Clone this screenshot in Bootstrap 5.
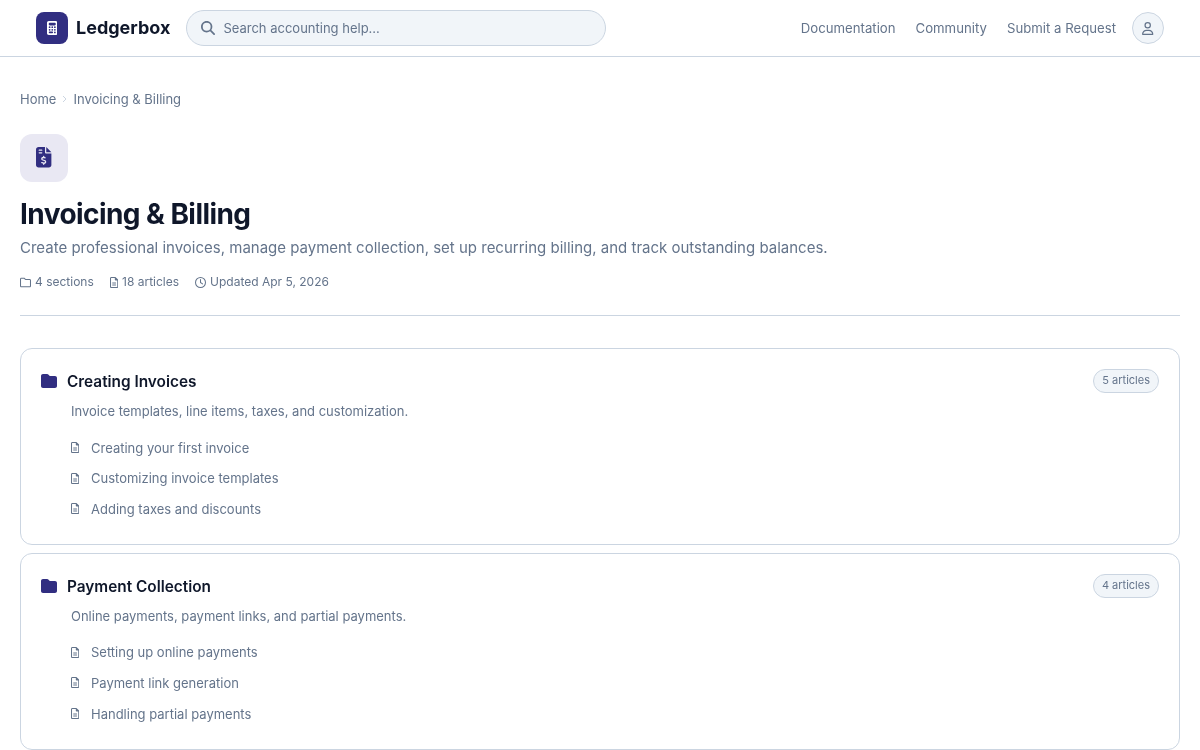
<!DOCTYPE html>
<html lang="en">
<head>
<meta charset="utf-8">
<title>Invoicing &amp; Billing</title>
<link href="https://cdn.jsdelivr.net/npm/bootstrap@5.3.0/dist/css/bootstrap.min.css" rel="stylesheet">
<style>
html,body{height:750px;overflow:hidden}
body{font-family:Inter,"Liberation Sans",sans-serif;color:#0f172a;background:#fff}
svg{fill:currentColor;flex:none}
.page-shell{will-change:transform}
.topbar{height:57px;padding:0 36px;border-bottom:1px solid #cbd5e1}
.logo-box{width:32px;height:32px;border-radius:8px;background:#312e81;color:#fff}
.brand-name{font-size:18px;font-weight:700;color:#0f172a;margin-left:8px;padding-bottom:2px}
.search-pill{width:420px;height:36px;margin-left:16px;padding:0 14px;gap:8px;background:#f1f5f9;border:1px solid #cbd5e1;border-radius:18px;color:#64748b;font-size:13px}
.search-text{padding-top:2px}
.top-link{font-size:13.2px;color:#64748b;text-decoration:none;padding-top:2px}
.avatar{width:32px;height:32px;border-radius:50%;background:#f1f5f9;border:1px solid #cbd5e1;color:#64748b}
.page-main{padding:32px 20px 0}
.crumbs{font-size:13px;line-height:20px;color:#64748b}
.crumbs a{color:#64748b;text-decoration:none}
.crumb-sep{margin:0 6px}
.hero-icon{width:48px;height:48px;border-radius:12px;background:#e9e8f3;color:#312e81;margin-top:25px;padding-bottom:1px}
.hero-title{font-size:28px;font-weight:700;line-height:34px;letter-spacing:-.56px;margin:15px 0 0;color:#0f172a}
.hero-sub{font-size:15px;line-height:22px;color:#64748b;margin:6px 0 0}
.hero-meta{font-size:12px;line-height:18px;color:#64748b;margin-top:14px;padding-bottom:24px;border-bottom:1px solid #cbd5e1;margin-bottom:32px}
.sec-card{height:196.8px;border:1px solid #cbd5e1;border-radius:12px;padding:20px;margin-bottom:8px}
.sec-head{height:24px}
.sec-title{font-size:15.36px;font-weight:600;line-height:24px;margin:0;padding-top:2px;color:#0f172a}
.sec-count{height:24px;padding:0 8px 2px;font-size:11px;color:#64748b;background:#f1f5f9;border:1px solid #cbd5e1;border-radius:12px}
.sec-desc{font-size:13px;line-height:20px;color:#64748b;margin:8px 0 0 30px}
.art-list{margin:12px 0 0 30px;padding:0;list-style:none}
.art-list li{height:30.7px;font-size:13px;color:#64748b}
.art-list a{color:#64748b;text-decoration:none}
.art-list svg{margin-right:11.750px;position:relative;top:-1px}
.folder-ico{margin-right:10px;color:#312e81}
</style>
</head>
<body>
<svg class="d-none">
  <symbol id="i-doc" viewBox="0 0 384 512"><path d="M64 464c-8.800 0-16-7.200-16-16V64c0-8.800 7.200-16 16-16H224v80c0 17.700 14.300 32 32 32h80V448c0 8.800-7.200 16-16 16H64zM64 0C28.700 0 0 28.700 0 64V448c0 35.300 28.700 64 64 64H320c35.300 0 64-28.700 64-64V154.500c0-17-6.700-33.300-18.700-45.300L274.700 18.700C262.700 6.700 246.500 0 229.500 0H64zm56 256c-13.300 0-24 10.700-24 24s10.700 24 24 24H264c13.300 0 24-10.700 24-24s-10.700-24-24-24H120zm0 96c-13.300 0-24 10.700-24 24s10.700 24 24 24H264c13.300 0 24-10.700 24-24s-10.700-24-24-24H120z"/></symbol>
  <symbol id="i-folder" viewBox="0 0 512 512"><path d="M64 480H448c35.300 0 64-28.700 64-64V160c0-35.300-28.700-64-64-64H288c-10.100 0-19.600-4.700-25.600-12.800L243.200 57.600C231.100 41.500 212.100 32 192 32H64C28.700 32 0 60.700 0 96V416c0 35.300 28.700 64 64 64z"/></symbol>
</svg>
<div class="page-shell">
<nav class="topbar d-flex align-items-center">
  <div class="logo-box d-flex align-items-center justify-content-center">
    <svg width="10.500" height="14" viewBox="0 0 384 512"><path d="M64 0C28.700 0 0 28.700 0 64V448c0 35.300 28.700 64 64 64H320c35.300 0 64-28.700 64-64V64c0-35.300-28.700-64-64-64H64zM96 64H288c17.700 0 32 14.300 32 32v32c0 17.700-14.300 32-32 32H96c-17.700 0-32-14.300-32-32V96c0-17.700 14.300-32 32-32zm32 160a32 32 0 1 1 -64 0 32 32 0 1 1 64 0zM96 352a32 32 0 1 1 0-64 32 32 0 1 1 0 64zM64 416c0-17.700 14.300-32 32-32h96c17.700 0 32 14.300 32 32s-14.300 32-32 32H96c-17.700 0-32-14.300-32-32zM192 256a32 32 0 1 1 0-64 32 32 0 1 1 0 64zm32 64a32 32 0 1 1 -64 0 32 32 0 1 1 64 0zm64-64a32 32 0 1 1 0-64 32 32 0 1 1 0 64zm32 64a32 32 0 1 1 -64 0 32 32 0 1 1 64 0zM288 448a32 32 0 1 1 0-64 32 32 0 1 1 0 64z"/></svg>
  </div>
  <span class="brand-name">Ledgerbox</span>
  <div class="search-pill d-flex align-items-center">
    <svg width="14" height="14" viewBox="0 0 512 512"><path d="M416 208c0 45.900-14.900 88.300-40 122.700L502.600 457.400c12.500 12.500 12.500 32.800 0 45.300s-32.800 12.500-45.300 0L330.700 376c-34.400 25.200-76.800 40-122.700 40C93.100 416 0 322.900 0 208S93.100 0 208 0S416 93.100 416 208zM208 352a144 144 0 1 0 0-288 144 144 0 1 0 0 288z"/></svg>
    <span class="search-text">Search accounting help...</span>
  </div>
  <div class="ms-auto d-flex align-items-center gap-3">
    <a class="top-link me-1" href="#">Documentation</a>
    <a class="top-link me-1" href="#">Community</a>
    <a class="top-link" href="#">Submit a Request</a>
    <div class="avatar d-flex align-items-center justify-content-center">
      <svg width="11.400" height="13" viewBox="0 0 448 512"><path d="M304 128a80 80 0 1 0 -160 0 80 80 0 1 0 160 0zM96 128a128 128 0 1 1 256 0A128 128 0 1 1 96 128zM49.300 464H398.700c-8.900-63.300-63.300-112-129-112H178.300c-65.700 0-120.100 48.700-129 112zM0 482.300C0 383.800 79.800 304 178.300 304h91.400C368.200 304 448 383.800 448 482.300c0 16.400-13.300 29.700-29.700 29.700H29.700C13.300 512 0 498.700 0 482.300z"/></svg>
    </div>
  </div>
</nav>
<main class="page-main">
  <div class="crumbs d-flex align-items-center">
    <a href="#">Home</a>
    <svg class="crumb-sep" width="5" height="8" viewBox="0 0 5 8" style="fill:none" stroke="#cbd5e1" stroke-width="1"><path d="M1 1l3 3-3 3"/></svg>
    <a href="#">Invoicing &amp; Billing</a>
  </div>
  <div class="hero-icon d-flex align-items-center justify-content-center">
    <svg width="15.400" height="20.500" viewBox="0 0 384 512"><path d="M64 0C28.700 0 0 28.700 0 64V448c0 35.300 28.700 64 64 64H320c35.300 0 64-28.700 64-64V160H256c-17.700 0-32-14.300-32-32V0H64zM256 0V128H384L256 0zM64 80c0-8.800 7.200-16 16-16h64c8.800 0 16 7.200 16 16s-7.200 16-16 16H80c-8.800 0-16-7.200-16-16zm0 64c0-8.800 7.200-16 16-16h64c8.800 0 16 7.200 16 16s-7.200 16-16 16H80c-8.800 0-16-7.200-16-16zm128 72c8.800 0 16 7.200 16 16v17.300c8.500 1.200 16.700 3.100 24.100 5.100c8.500 2.300 13.600 11 11.300 19.600s-11 13.600-19.600 11.300c-11.100-3-22-5.200-32.100-5.300c-8.400-.1-17.400 1.800-23.600 5.500c-5.700 3.400-8.100 7.300-8.100 12.800c0 3.700 1.300 6.500 7.300 10.100c6.900 4.100 16.600 7.100 29.200 10.900l.5 .1c11.300 3.400 25.300 7.600 36.300 14.600c12.100 7.600 22.400 19.700 22.700 38.200c.3 19.300-9.600 33.300-22.900 41.600c-7.700 4.800-16.400 7.600-25.100 9.100V432c0 8.800-7.200 16-16 16s-16-7.200-16-16V414.800c-11.200-2.100-21.700-5.700-30.900-8.900c-2.100-.7-4.200-1.400-6.200-2.100c-8.400-2.800-12.900-11.900-10.100-20.200s11.900-12.900 20.200-10.100c2.500 .8 4.800 1.600 7.100 2.400c13.600 4.600 24.600 8.400 36.300 8.700c9.100 .3 17.900-1.700 23.700-5.300c5.100-3.200 7.900-7.300 7.800-14c-.1-4.600-1.800-7.800-7.700-11.600c-6.800-4.300-16.500-7.400-29-11.200l-1.600-.5c-11-3.300-24.300-7.300-34.800-13.700c-12-7.300-22.600-18.900-22.700-37.300c-.1-19.400 10.800-32.800 23.800-40.500c7.500-4.400 15.800-7.200 24.100-8.700V232c0-8.800 7.200-16 16-16z"/></svg>
  </div>
  <h1 class="hero-title">Invoicing &amp; Billing</h1>
  <p class="hero-sub">Create professional invoices, manage payment collection, set up recurring billing, and track outstanding balances.</p>
  <div class="hero-meta d-flex align-items-center">
    <svg width="11" height="11" viewBox="0 0 512 512"><path d="M64 480H448c35.300 0 64-28.700 64-64V160c0-35.300-28.700-64-64-64H298.500c-17 0-33.300-6.700-45.300-18.700L226.700 50.700c-12-12-28.300-18.700-45.300-18.700H64C28.700 32 0 60.700 0 96V416c0 35.300 28.700 64 64 64zM48 96c0-8.800 7.200-16 16-16H181.500c4.200 0 8.300 1.700 11.300 4.700l26.500 26.500c21 21 49.500 32.800 79.200 32.800H448c8.800 0 16 7.200 16 16V416c0 8.800-7.200 16-16 16H64c-8.800 0-16-7.200-16-16V96z"/></svg>
    <span class="ms-1 me-3">4 sections</span>
    <svg width="8.250" height="11"><use href="#i-doc"/></svg>
    <span class="ms-1 me-3">18 articles</span>
    <svg width="11" height="11" viewBox="0 0 512 512"><path d="M464 256A208 208 0 1 1 48 256a208 208 0 1 1 416 0zM0 256a256 256 0 1 0 512 0A256 256 0 1 0 0 256zM232 120V256c0 8 4 15.500 10.700 20l96 64c11 7.400 25.900 4.400 33.300-6.700s4.400-25.900-6.700-33.300L280 243.200V120c0-13.300-10.700-24-24-24s-24 10.700-24 24z"/></svg>
    <span class="ms-1">Updated Apr 5, 2026</span>
  </div>

  <section class="sec-card">
    <div class="sec-head d-flex align-items-center">
      <svg class="folder-ico" width="16" height="16"><use href="#i-folder"/></svg>
      <h2 class="sec-title">Creating Invoices</h2>
      <span class="sec-count ms-auto d-inline-flex align-items-center">5 articles</span>
    </div>
    <p class="sec-desc">Invoice templates, line items, taxes, and customization.</p>
    <ul class="art-list">
      <li class="d-flex align-items-center"><svg width="8.250" height="11"><use href="#i-doc"/></svg><a href="#">Creating your first invoice</a></li>
      <li class="d-flex align-items-center"><svg width="8.250" height="11"><use href="#i-doc"/></svg><a href="#">Customizing invoice templates</a></li>
      <li class="d-flex align-items-center"><svg width="8.250" height="11"><use href="#i-doc"/></svg><a href="#">Adding taxes and discounts</a></li>
    </ul>
  </section>

  <section class="sec-card">
    <div class="sec-head d-flex align-items-center">
      <svg class="folder-ico" width="16" height="16"><use href="#i-folder"/></svg>
      <h2 class="sec-title">Payment Collection</h2>
      <span class="sec-count ms-auto d-inline-flex align-items-center">4 articles</span>
    </div>
    <p class="sec-desc">Online payments, payment links, and partial payments.</p>
    <ul class="art-list">
      <li class="d-flex align-items-center"><svg width="8.250" height="11"><use href="#i-doc"/></svg><a href="#">Setting up online payments</a></li>
      <li class="d-flex align-items-center"><svg width="8.250" height="11"><use href="#i-doc"/></svg><a href="#">Payment link generation</a></li>
      <li class="d-flex align-items-center"><svg width="8.250" height="11"><use href="#i-doc"/></svg><a href="#">Handling partial payments</a></li>
    </ul>
  </section>
</main>
</div>
<script src="https://cdn.jsdelivr.net/npm/bootstrap@5.3.0/dist/js/bootstrap.bundle.min.js"></script>
</body>
</html>
